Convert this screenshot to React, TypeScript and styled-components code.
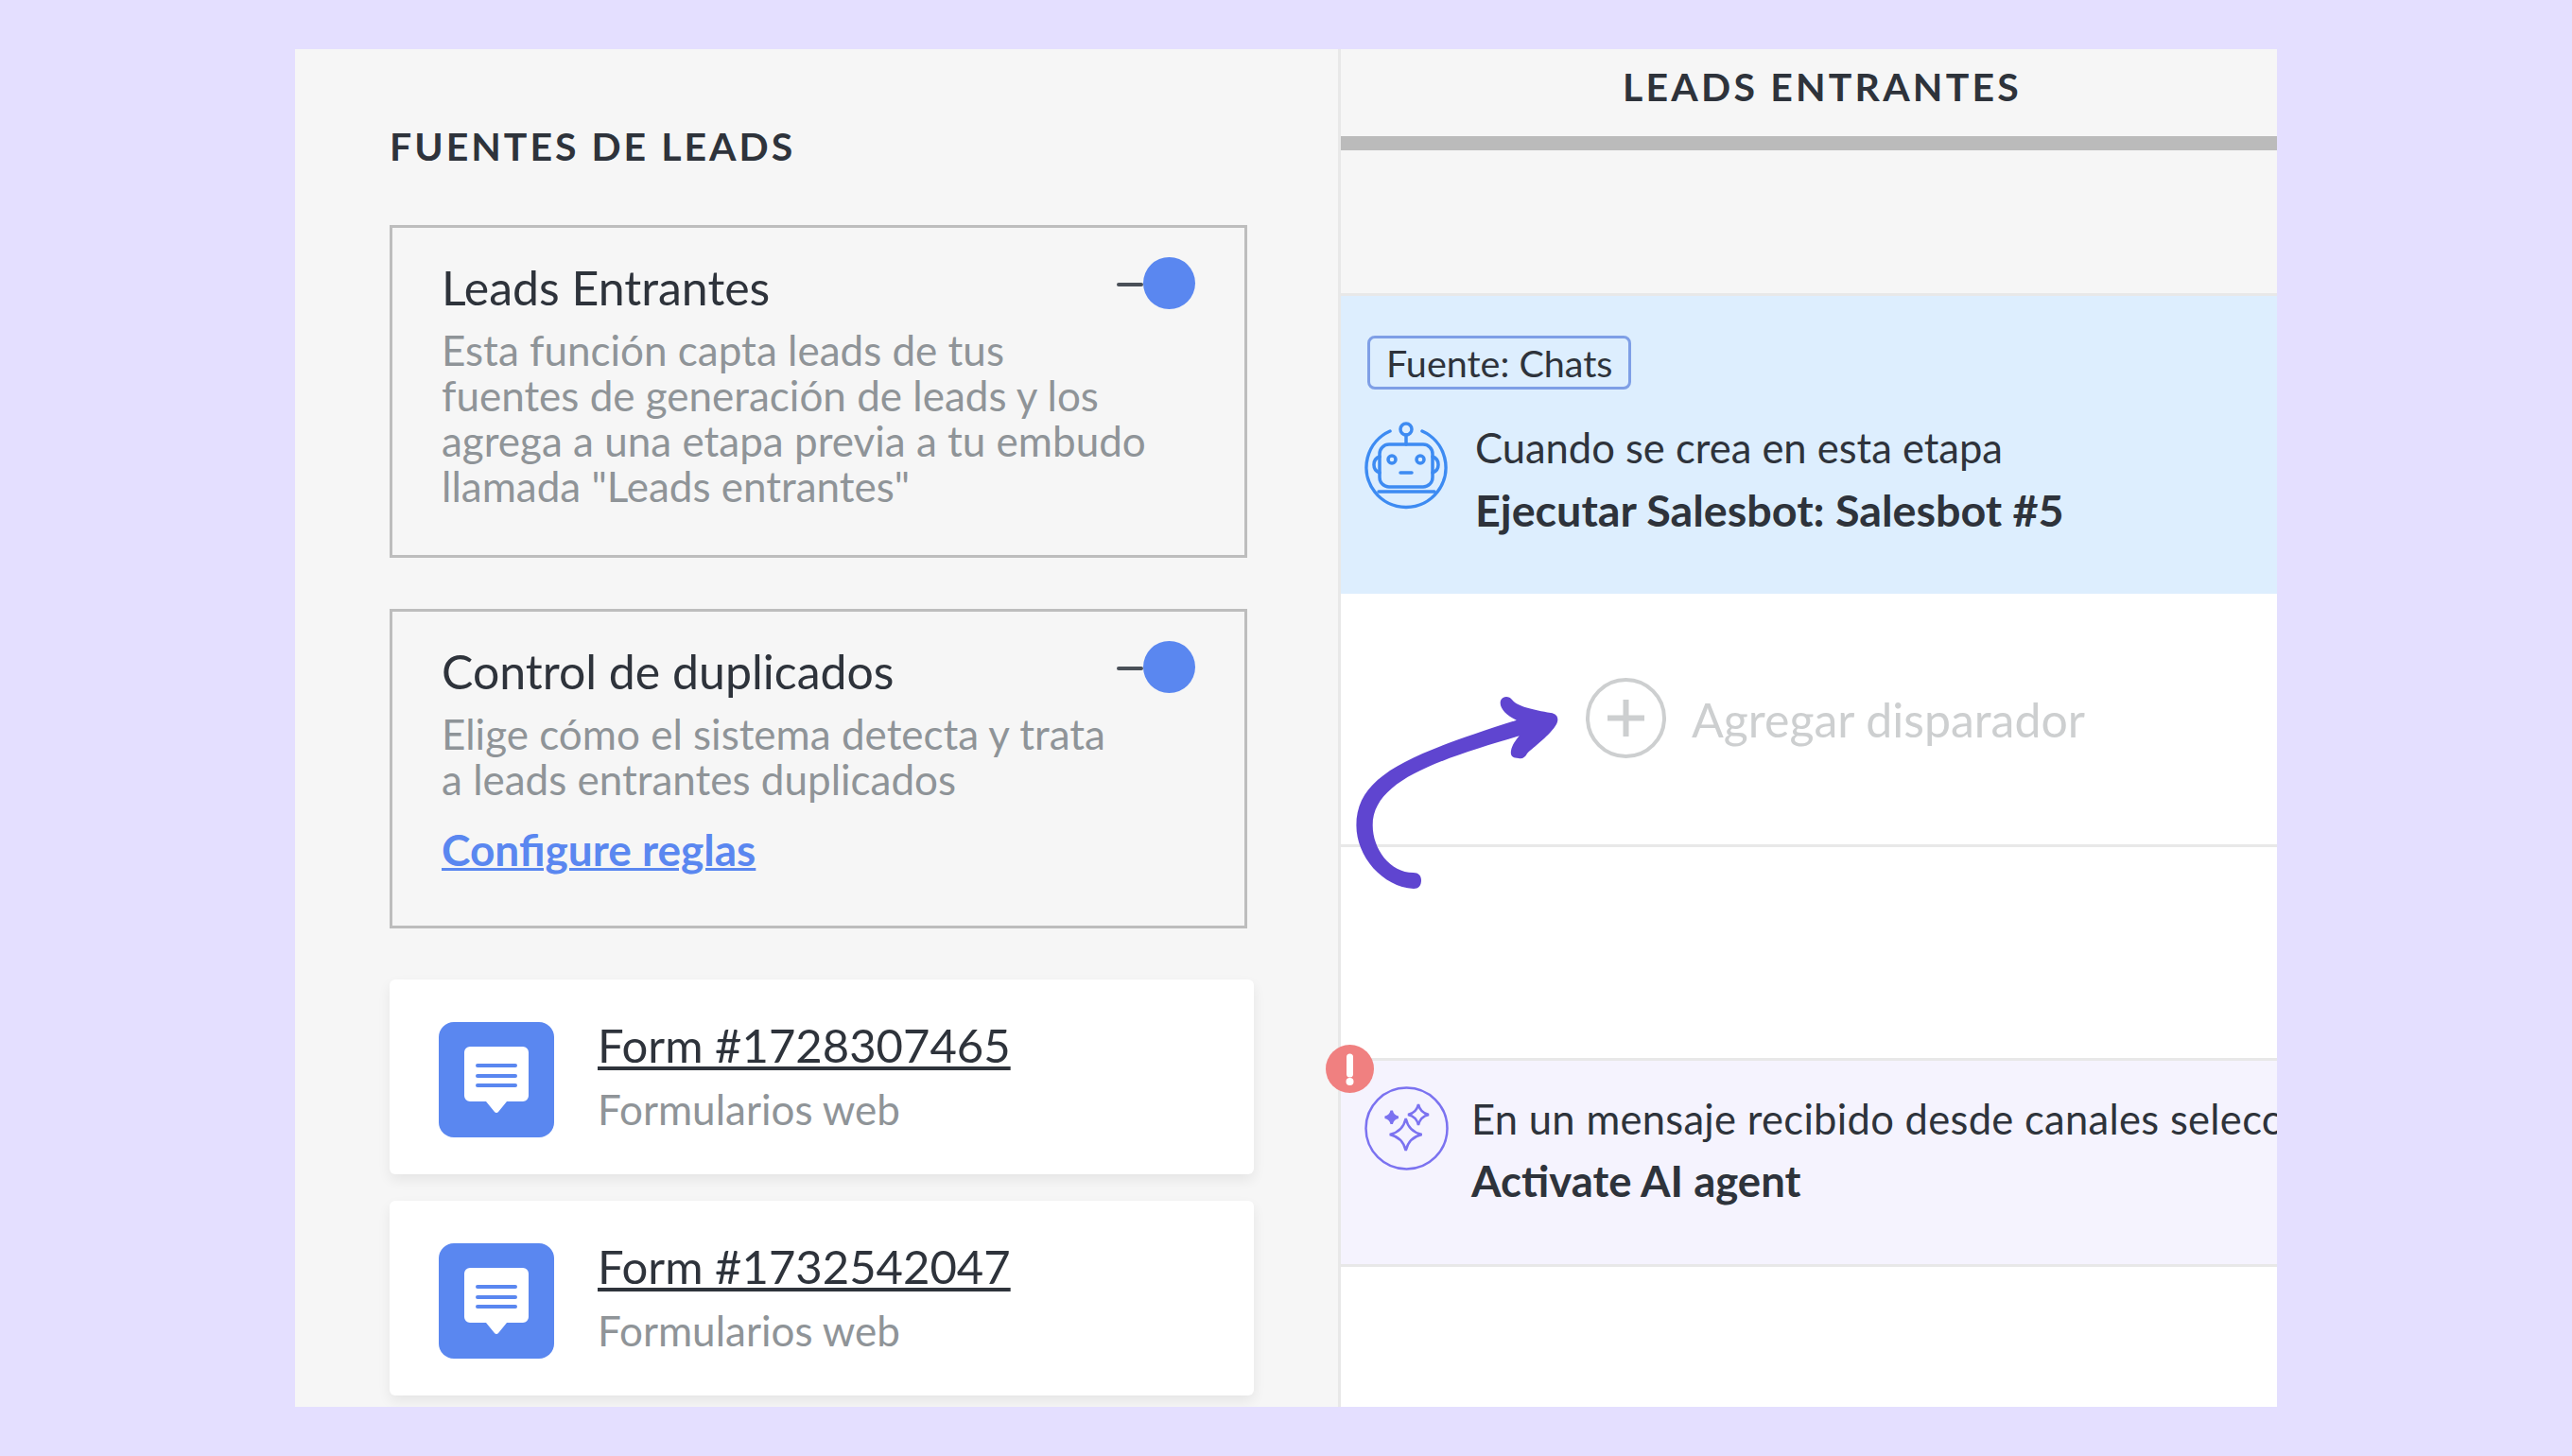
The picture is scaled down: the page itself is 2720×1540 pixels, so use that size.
import React from "react";
import styled, {createGlobalStyle} from "styled-components";

const GlobalStyle = createGlobalStyle`
  html, body {
    margin: 0;
    padding: 0;
    background: #e4dfff;
  }

  * {
    box-sizing: border-box;
  }
`;

const FONT = `"Lato", "Noto Sans", sans-serif`;

const Page = styled.div`
  width: 2720px;
  height: 1540px;
  padding: 52px 312px;
  font-family: ${FONT};
  color: #2e333b;
`;

const Frame = styled.div`
  position: relative;
  display: flex;
  width: 2096px;
  height: 1436px;
  overflow: hidden;
  background: #f6f6f6;
`;

const LeftPanel = styled.div`
  display: flex;
  flex-direction: column;
  flex: none;
  width: 1106px;
  padding: 79px 0 0 100px;
  border-right: 3px solid #e8e8e8;
`;

const SourcesTitle = styled.h2`
  margin: 0 0 59px;
  font-size: 41px;
  line-height: 48px;
  font-weight: 700;
  letter-spacing: 3px;
`;

const OptionCard = styled.div<{$height: number}>`
  flex: none;
  width: 907px;
  height: ${p => p.$height}px;
  margin-bottom: 54px;
  padding: 31px 52px 0 52px;
  border: 3px solid #bdbdbd;
`;

const OptionHead = styled.div`
  display: flex;
  justify-content: space-between;
  align-items: flex-start;
`;

const OptionTitle = styled.div`
  font-size: 50px;
  line-height: 64px;
`;

const Toggle = styled.div`
  display: flex;
  align-items: center;
`;

const ToggleLine = styled.span`
  width: 28px;
  height: 4px;
  margin-top: 2px;
  border-radius: 2px;
  background: #4a5058;
`;

const ToggleKnob = styled.span`
  width: 55px;
  height: 55px;
  border-radius: 50%;
  background: #5a87f0;
`;

const OptionText = styled.div`
  margin-top: 10px;
  font-size: 44px;
  line-height: 48px;
  color: #8f9498;
  white-space: nowrap;
`;

const RuleLink = styled.a`
  display: block;
  margin-top: 25px;
  font-size: 46px;
  line-height: 52px;
  font-weight: 700;
  color: #5a87f0;
  text-decoration: underline;
  text-decoration-thickness: 3px;
`;

const FormCard = styled.div`
  display: flex;
  flex: none;
  align-items: center;
  gap: 46px;
  width: 914px;
  height: 206px;
  margin-bottom: 28px;
  padding-left: 52px;
  border-radius: 6px;
  background: #fff;
  box-shadow: 0 6px 14px rgba(0, 0, 0, 0.07);
`;

const FormIcon = styled.svg`
  flex: none;
  width: 122px;
  height: 122px;
  margin-top: 6px;
`;

const FormCopy = styled.div`
  margin-bottom: 6px;
`;

const FormTitle = styled.div`
  font-size: 49px;
  line-height: 60px;
  text-decoration: underline;
  text-decoration-thickness: 4px;
  text-underline-offset: 4px;
`;

const FormKind = styled.div`
  margin-top: 14px;
  font-size: 44px;
  line-height: 48px;
  color: #8f9498;
`;

const RightPanel = styled.div`
  display: flex;
  flex-direction: column;
  flex: 1;
  min-width: 0;
  background: #fff;
`;

const StageHead = styled.div`
  flex: none;
  height: 107px;
  padding: 16px 0 0 28px;
  border-bottom: 15px solid #bbbbbb;
  background: #f6f6f6;
  font-size: 41px;
  line-height: 48px;
  font-weight: 700;
  letter-spacing: 3.2px;
  text-align: center;
`;

const StageGap = styled.div`
  flex: none;
  height: 151px;
  background: #f6f6f6;
`;

const Section = styled.div<{$height?: number; $bg: string; $plain?: boolean}>`
  flex: ${p => (p.$height ? "none" : "1")};
  height: ${p => (p.$height ? `${p.$height}px` : "auto")};
  border-top: 3px solid ${p => (p.$plain ? "transparent" : "#e8e8e8")};
  background: ${p => p.$bg};
  white-space: nowrap;
`;

const SourceBadge = styled.div`
  display: inline-block;
  height: 57px;
  margin: 42px 0 0 28px;
  padding: 0 17px;
  border: 3px solid #7f9fe6;
  border-radius: 8px;
  font-size: 39.500px;
  line-height: 51px;
`;

const ActionRow = styled.div<{$top: number; $gap: number}>`
  display: flex;
  align-items: flex-start;
  gap: ${p => p.$gap}px;
  margin-top: ${p => p.$top}px;
  padding-left: 22px;
`;

const ActionIcon = styled.svg`
  flex: none;
  width: 96px;
  height: 98px;
`;

const ActionCopy = styled.div<{$top: number}>`
  padding-top: ${p => p.$top}px;
`;

const ActionText = styled.div<{$spacing?: number}>`
  font-size: 43.500px;
  line-height: 48px;
  letter-spacing: ${p => p.$spacing || 0}px;
`;

const ActionName = styled.div<{$size: number}>`
  margin-top: 16px;
  font-size: ${p => p.$size}px;
  line-height: 52px;
  font-weight: 700;
`;

const AddRow = styled.div`
  display: flex;
  align-items: center;
  gap: 27px;
  padding: 86px 0 0 259px;
`;

const AddIcon = styled.svg`
  flex: none;
  width: 85px;
  height: 85px;
`;

const AddLabel = styled.div`
  margin-top: 3px;
  font-size: 50px;
  line-height: 60px;
  color: #cdcfd0;
`;

const PointerArrow = styled.svg`
  position: absolute;
  left: 1088px;
  top: 628px;
  width: 260px;
  height: 270px;
`;

const AlertDot = styled.svg`
  position: absolute;
  left: 1090px;
  top: 1053px;
  width: 51px;
  height: 51px;
`;

// four pointed star, used for the sparkles of the AI agent icon
function star(cx: number, cy: number, a: number) {
    const k = a * 0.18;
    return `M${cx} ${cy - a}Q${cx + k} ${cy - k} ${cx + a} ${cy}Q${cx + k} ${cy + k} ${cx} ${cy + a}Q${cx - k} ${cy + k} ${cx - a} ${cy}Q${cx - k} ${cy - k} ${cx} ${cy - a}Z`;
}

function MessageIcon() {
    return (
        <FormIcon viewBox="0 0 122 122">
            <rect width="122" height="122" rx="16" fill="#5a87f0" />
            <path
                d="M33 26H89a6 6 0 0 1 6 6V78a6 6 0 0 1-6 6H72L63 95a2.500 2.500 0 0 1-4 0L50 84H33a6 6 0 0 1-6-6V32a6 6 0 0 1 6-6Z"
                fill="#fff"
            />
            <path d="M41 46H81M41 57H81M41 67H81" stroke="#5a87f0" strokeWidth="4" strokeLinecap="round" />
        </FormIcon>
    );
}

function FormRow({name}: {name: string}) {
    return (
        <FormCard>
            <MessageIcon />
            <FormCopy>
                <FormTitle>{name}</FormTitle>
                <FormKind>Formularios web</FormKind>
            </FormCopy>
        </FormCard>
    );
}

function OptionSwitch() {
    return (
        <Toggle>
            <ToggleLine />
            <ToggleKnob />
        </Toggle>
    );
}

export default function App() {
    return (
        <Page>
            <GlobalStyle />
            <Frame>
                <LeftPanel>
                    <SourcesTitle>FUENTES DE LEADS</SourcesTitle>
                    <OptionCard $height={352}>
                        <OptionHead>
                            <OptionTitle>Leads Entrantes</OptionTitle>
                            <OptionSwitch />
                        </OptionHead>
                        <OptionText>
                            Esta función capta leads de tus<br />
                            fuentes de generación de leads y los<br />
                            agrega a una etapa previa a tu embudo<br />
                            llamada "Leads entrantes"
                        </OptionText>
                    </OptionCard>
                    <OptionCard $height={338}>
                        <OptionHead>
                            <OptionTitle>Control de duplicados</OptionTitle>
                            <OptionSwitch />
                        </OptionHead>
                        <OptionText>
                            Elige cómo el sistema detecta y trata<br />
                            a leads entrantes duplicados
                        </OptionText>
                        <RuleLink>Configure reglas</RuleLink>
                    </OptionCard>
                    <FormRow name="Form #1728307465" />
                    <FormRow name="Form #1732542047" />
                </LeftPanel>
                <RightPanel>
                    <StageHead>LEADS ENTRANTES</StageHead>
                    <StageGap />
                    <Section $height={318} $bg="#ddeefe">
                        <SourceBadge>Fuente: Chats</SourceBadge>
                        <ActionRow $top={33} $gap={24}>
                            <ActionIcon viewBox="0 0 96 98" fill="none" stroke="#3d8bf2" strokeWidth="3.5" strokeLinecap="round">
                                <path d="M30 11A42 42 0 1 0 64 11" />
                                <circle cx="47" cy="9" r="6" />
                                <path d="M47 15V25" />
                                <rect x="19" y="25" width="56" height="45" rx="10" />
                                <circle cx="32" cy="41" r="4" />
                                <circle cx="62" cy="41" r="4" />
                                <path d="M41 55H53" />
                                <path d="M19 38A9 9 0 0 0 19 55" />
                                <path d="M75 38A9 9 0 0 1 75 55" />
                                <path d="M18 75H77" />
                            </ActionIcon>
                            <ActionCopy $top={4}>
                                <ActionText>Cuando se crea en esta etapa</ActionText>
                                <ActionName $size={46.7}>Ejecutar Salesbot: Salesbot #5</ActionName>
                            </ActionCopy>
                        </ActionRow>
                    </Section>
                    <Section $height={265} $bg="#fff" $plain>
                        <AddRow>
                            <AddIcon viewBox="0 0 85 85" fill="none" stroke="#cdcfd0">
                                <circle cx="42.500" cy="42.500" r="40.500" strokeWidth="4" />
                                <path d="M23 42.500H62M42.500 23V62" strokeWidth="6" />
                            </AddIcon>
                            <AddLabel>Agregar disparador</AddLabel>
                        </AddRow>
                    </Section>
                    <Section $height={226} $bg="#fff" />
                    <Section $height={218} $bg="#f5f3fe">
                        <ActionRow $top={24} $gap={20}>
                            <ActionIcon viewBox="0 0 96 98" fill="none" stroke="#7b72f0" strokeWidth="2.500">
                                <circle cx="47.500" cy="47.500" r="43" />
                                <path d={star(46.7, 54, 17)} />
                                <path d={star(60, 33, 11)} />
                                <path d={star(31.7, 35.7, 7)} fill="#7b72f0" />
                            </ActionIcon>
                            <ActionCopy $top={13}>
                                <ActionText $spacing={0.3}>En un mensaje recibido desde canales seleccionados</ActionText>
                                <ActionName $size={45.5}>Activate AI agent</ActionName>
                            </ActionCopy>
                        </ActionRow>
                    </Section>
                    <Section $bg="#fff" />
                </RightPanel>
                <PointerArrow viewBox="0 0 260 270">
                    <path
                        d="M94.700 243C100 243 103 246 103 251C103 257 100 260 95 260C62 258 34.400 226 34.400 193C34.400 140 90 118 203.800 81.700C192 76 185 68 187 61C189 56 196 56 199 60C204 67 222 71 240 74C247 75 249 80 246 86C240 97 222 110 215 117C213 121 210 123 206 122C200 122 197 120 198 114C199 108 203 103 206.700 98.300C120 124 51.700 146 51.700 193C51.700 218 70 243 94.700 243Z"
                        fill="#5f45d0"
                    />
                </PointerArrow>
                <AlertDot viewBox="0 0 51 51">
                    <circle cx="25.500" cy="25.500" r="25.500" fill="#f08080" />
                    <path d="M25.500 13V31" stroke="#fff" strokeWidth="7" strokeLinecap="round" />
                    <circle cx="25.500" cy="39" r="4" fill="#fff" />
                </AlertDot>
            </Frame>
        </Page>
    );
}
